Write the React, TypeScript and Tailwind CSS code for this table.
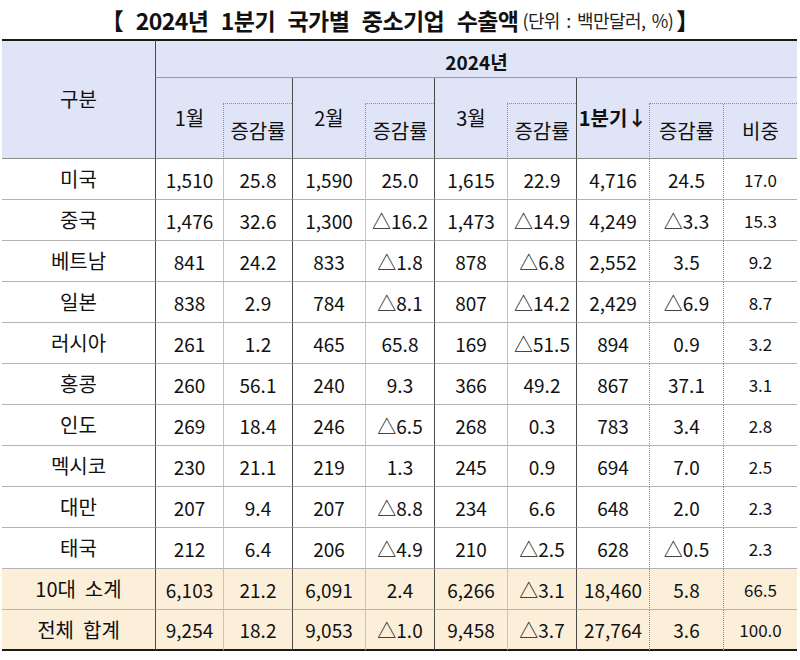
import React from "react";

interface Row {
  name: string;
  values: string[];
  total?: boolean;
}

const ROWS: Row[] = [
  { name: "미국", values: ["1,510", "25.8", "1,590", "25.0", "1,615", "22.9", "4,716", "24.5", "17.0"] },
  { name: "중국", values: ["1,476", "32.6", "1,300", "△16.2", "1,473", "△14.9", "4,249", "△3.3", "15.3"] },
  { name: "베트남", values: ["841", "24.2", "833", "△1.8", "878", "△6.8", "2,552", "3.5", "9.2"] },
  { name: "일본", values: ["838", "2.9", "784", "△8.1", "807", "△14.2", "2,429", "△6.9", "8.7"] },
  { name: "러시아", values: ["261", "1.2", "465", "65.8", "169", "△51.5", "894", "0.9", "3.2"] },
  { name: "홍콩", values: ["260", "56.1", "240", "9.3", "366", "49.2", "867", "37.1", "3.1"] },
  { name: "인도", values: ["269", "18.4", "246", "△6.5", "268", "0.3", "783", "3.4", "2.8"] },
  { name: "멕시코", values: ["230", "21.1", "219", "1.3", "245", "0.9", "694", "7.0", "2.5"] },
  { name: "대만", values: ["207", "9.4", "207", "△8.8", "234", "6.6", "648", "2.0", "2.3"] },
  { name: "태국", values: ["212", "6.4", "206", "△4.9", "210", "△2.5", "628", "△0.5", "2.3"] },
  { name: "10대  소계", values: ["6,103", "21.2", "6,091", "2.4", "6,266", "△3.1", "18,460", "5.8", "66.5"], total: true },
  { name: "전체  합계", values: ["9,254", "18.2", "9,053", "△1.0", "9,458", "△3.7", "27,764", "3.6", "100.0"], total: true },
];

// left border per value column (index 0..8)
const BODY_LEFT = [
  "border-l border-l-[#4a4a4a]",
  "border-l border-l-[#c4c4c4]",
  "border-l border-l-[#4a4a4a]",
  "border-l border-l-[#c4c4c4]",
  "border-l border-l-[#4a4a4a]",
  "border-l border-l-[#c4c4c4]",
  "border-l border-l-[#4a4a4a]",
  "border-l border-dotted border-l-[#8a8a8a]",
  "border-l border-dotted border-l-[#8a8a8a]",
];

export default function App() {
  return (
    <div className="h-[660px] w-[800px] bg-white font-['Noto_Sans_CJK_KR','Noto_Sans',sans-serif] text-[#111]">
      <div className="flex h-[39px] items-center justify-center pt-[1px] leading-none">
        <span className="text-[23px] font-bold tracking-[-0.6px] [word-spacing:8px]">
          【 2024년 1분기 국가별 중소기업 수출액
        </span>
        <span className="ml-[4px] text-[18px] tracking-[-0.6px] text-[#222] [word-spacing:3px]">(단위 : 백만달러, %)</span>
        <span className="ml-[3px] text-[23px] font-bold">】</span>
      </div>

      <table className="ml-[2px] w-[795px] table-fixed border-separate border-spacing-0 text-center text-[19px] leading-none">
        <colgroup>
          <col className="w-[153px]" />
          <col className="w-[68px]" />
          <col className="w-[69px]" />
          <col className="w-[73px]" />
          <col className="w-[69px]" />
          <col className="w-[73px]" />
          <col className="w-[69px]" />
          <col className="w-[73px]" />
          <col className="w-[74px]" />
          <col className="w-[74px]" />
        </colgroup>
        <thead className="bg-[#dfe4f7] text-[20px]">
          <tr className="h-[39px]">
            <th
              rowSpan={3}
              className="border-t-2 border-b border-t-[#1a1a1a] border-b-[#8c8c8c] pb-[2px] font-normal"
            >
              구분
            </th>
            <th
              colSpan={10}
              className="border-t-2 border-b border-l border-t-[#1a1a1a] border-b-[#9a9a9a] border-l-[#4a4a4a] pt-[4px] text-[19px] font-bold"
            >
              2024년
            </th>
          </tr>
          <tr className="h-[26px]">
            <th rowSpan={2} className="border-b border-l border-b-[#8c8c8c] border-l-[#4a4a4a] pb-[1px] font-normal">
              1월
            </th>
            <th className="border-b border-dotted border-b-[#8a8a8a]" />
            <th rowSpan={2} className="border-b border-l border-b-[#8c8c8c] border-l-[#4a4a4a] pb-[1px] font-normal">
              2월
            </th>
            <th className="border-b border-dotted border-b-[#8a8a8a]" />
            <th rowSpan={2} className="border-b border-l border-b-[#8c8c8c] border-l-[#4a4a4a] pb-[1px] font-normal">
              3월
            </th>
            <th className="border-b border-dotted border-b-[#8a8a8a]" />
            <th rowSpan={2} className="border-b border-l border-b-[#8c8c8c] border-l-[#4a4a4a] pb-[1px] font-bold">
              1분기↓
            </th>
            <th colSpan={2} className="border-b border-dotted border-b-[#8a8a8a]" />
          </tr>
          <tr className="h-[55px]">
            {["증감률", "증감률", "증감률", "증감률", "비중"].map((label, i) => (
              <th
                key={i}
                className="border-b border-l border-dotted border-b-[#8c8c8c] border-l-[#8a8a8a] [border-bottom-style:solid] font-normal"
              >
                {label}
              </th>
            ))}
          </tr>
        </thead>
        <tbody>
          {ROWS.map((row, r) => {
            const last = r === ROWS.length - 1;
            const bottom = last
              ? "border-b-2 border-b-[#1a1a1a]"
              : "border-b border-b-[#b3b3b3]";
            return (
              <tr key={row.name} className={`h-[41px] ${row.total ? "bg-[#fcefda]" : ""}`}>
                <td className={`${bottom} whitespace-pre text-[20px]`}>{row.name}</td>
                {row.values.map((v, i) => (
                  <td
                    key={i}
                    className={`${bottom} ${BODY_LEFT[i]} ${i === 8 ? "text-[17px]" : ""} ${
                      i === 7 || i === 8 ? "[border-bottom-style:solid]" : ""
                    }`}
                  >
                    {v}
                  </td>
                ))}
              </tr>
            );
          })}
        </tbody>
      </table>
    </div>
  );
}
